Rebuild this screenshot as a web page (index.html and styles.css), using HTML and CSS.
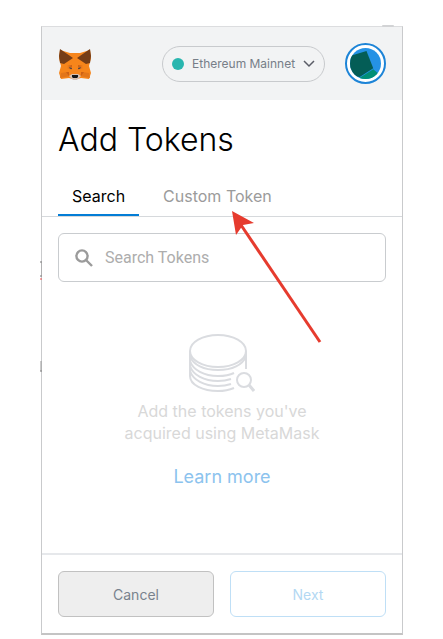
FILE: index.html
```html
<!DOCTYPE html>
<html lang="en">
<head>
  <meta charset="UTF-8">
  <title>Add Tokens</title>
  <meta name="viewport" content="width=device-width, initial-scale=1.0">
  <link rel="stylesheet" href="styles.css">
</head>
<body>
  <main class="popup">
    <header class="top-bar">
      <svg class="fox" viewBox="0 0 34 32" aria-label="MetaMask" role="img">
        <path fill="#f6851b" d="M2 2l10 3h10l10-3 1 8-2 8 2 7-2 6-8-1-4 1h-4l-4-1-8 1-2-6 2-7-2-8z"/>
        <path fill="#763d16" d="M2 1l13 9-9 6-4-1-1-7zM32 1L19 10l9 6 4-1 1-7z"/>
        <path fill="#e2761b" d="M3 25l7-1 2 4-10 2zM31 25l-7-1-2 4 10 2z"/>
        <path fill="#e4751f" d="M14 17l-5 3 5 2zM20 17l5 3-5 2z"/>
        <path fill="#cd6116" d="M9 18l5-1v2zM25 18l-5-1v2zM8 24h3v4zM26 24h-3v4z"/>
        <path fill="#5b4a3f" d="M11 19l3 1v1h-2zM23 19l-3 1v1h2z"/>
        <path fill="#d7c1b3" d="M11 28l3-2h6l3 2-4 4h-4z"/>
        <path fill="#161616" d="M14 27h6v2l-1 1h-4l-1-1z"/>
      </svg>
      <label class="network">
        <span class="network-dot"></span>
        <select class="network-select" aria-label="Network">
          <option>Ethereum Mainnet</option>
        </select>
        <svg class="chevron" viewBox="0 0 12 8"><path d="M1 1l5 5 5-5"/></svg>
      </label>
      <button class="account" type="button" aria-label="My account">
        <svg viewBox="0 0 32 32">
          <clipPath id="round"><circle cx="16" cy="16" r="16"/></clipPath>
          <g clip-path="url(#round)">
            <path fill="#2592e5" d="M0 0h32v32H0z"/>
            <path fill="#018e76" d="M8 32l16-10 6 5-4 8H10z"/>
            <path fill="#045d56" d="M-2 9l19-6 7 18-14 9-12-2z"/>
          </g>
        </svg>
      </button>
    </header>

    <h1>Add Tokens</h1>

    <nav class="tabs">
      <button class="tab active" type="button">Search</button>
      <button class="tab" type="button">Custom Token</button>
    </nav>

    <section class="content">
      <label class="search">
        <svg class="search-icon" viewBox="0 0 18 18"><circle cx="7" cy="7" r="5.6"/><path d="M11 11l6 6"/></svg>
        <input class="search-input" type="text" placeholder="Search Tokens" aria-label="Search Tokens">
      </label>

      <div class="empty">
        <svg class="coins" viewBox="0 0 66 58">
          <ellipse cx="29" cy="17" rx="28" ry="16"/>
          <path d="M1 17v25c0 9 13 15 28 15q9 0 16-3"/>
          <path d="M57 17v18"/>
          <path d="M1 22c3 9 14 14 28 14s25-5 28-14"/>
          <path d="M1 27c3 9 14 15 28 15 7 0 12-1 16-3"/>
          <path d="M1 32c3 9 14 15 28 15 5 0 10-1 13-2"/>
          <path d="M1 37c3 9 14 15 28 15 5 0 10-1 13-2"/>
          <circle cx="55" cy="46" r="7"/>
          <path class="handle" d="M60 51l5 6"/>
        </svg>
        <p>Add the tokens you've<br>acquired using MetaMask</p>
        <a class="learn-more" href="#">Learn more</a>
      </div>
    </section>

    <footer class="actions">
      <button class="btn cancel" type="button">Cancel</button>
      <button class="btn next" type="button" disabled>Next</button>
    </footer>

    <!-- arrow pointing at the Custom Token tab -->
    <svg class="arrow" viewBox="0 0 90 134">
      <path class="arrow-line" d="M9 14l79 117"/>
      <path class="arrow-head" d="M0 0l22 12-11 2-7 10z"/>
    </svg>

    <!-- bits of the page behind the popup -->
    <svg class="behind" viewBox="0 0 2 112">
      <path stroke="#777" d="M0 1h2M0 15h2M0 110h2"/>
      <path stroke="#999" d="M2 1v14M1 100v10"/>
      <path stroke="#f05050" d="M0 18h2"/>
    </svg>
    <span class="behind-top"></span>
  </main>
</body>
</html>
```

FILE: styles.css
```css
* {
  box-sizing: border-box;
}

body {
  margin: 0;
  padding: 26px 40px 4px 41px;
  background: #fff;
  font-family: Inter, "Liberation Sans", sans-serif;
}

button, select, input {
  font-family: inherit;
}

.popup {
  position: relative;
  border: 1px solid #c9cacc;
  border-top-color: #dcdddf;
  border-bottom: 2px solid #c4c4c4;
  background: #fff;
}

.top-bar {
  display: flex;
  align-items: center;
  height: 73px;
  padding: 0 16px;
  background: #f2f3f4;
}

.fox {
  width: 34px;
  height: 32px;
}

.network {
  display: flex;
  align-items: center;
  width: 163px;
  height: 36px;
  margin-left: auto;
  padding: 0 9px;
  border: 1px solid #c8cacd;
  border-radius: 18px;
}

.network-dot {
  flex: none;
  width: 12px;
  height: 12px;
  margin-right: 8px;
  border-radius: 50%;
  background: #29b6af;
}

.network-select {
  flex: 1;
  min-width: 0;
  padding: 0;
  border: 0;
  background: none;
  appearance: none;
  color: #777e88;
  font-size: 12px;
}

.chevron {
  flex: none;
  width: 12px;
  height: 8px;
  fill: none;
  stroke: #5b5d67;
  stroke-width: 1.5;
}

.account {
  width: 41px;
  height: 41px;
  margin-left: 20px;
  padding: 3px;
  border: 2px solid #1d84d7;
  border-radius: 50%;
  background: #fff;
}

.account svg {
  display: block;
  width: 31px;
  height: 31px;
}

h1 {
  margin: 0;
  padding: 17px 16px 0;
  color: #000;
  font-size: 32px;
  font-weight: 300;
  line-height: 46px;
}

.tabs {
  display: flex;
  gap: 10px;
  padding: 12px 16px 0;
  border-bottom: 1px solid #d6d9dc;
}

.tab {
  height: 41px;
  padding: 2px 14px 0;
  border: 0;
  border-bottom: 2px solid transparent;
  background: none;
  color: #9b9b9b;
  font-size: 16px;
}

.active {
  border-bottom-color: #037dd6;
  color: #000;
}

.content {
  padding: 16px 16px 0;
}

.search {
  display: flex;
  align-items: center;
  height: 49px;
  padding: 0 16px;
  border: 1px solid #c9cccf;
  border-radius: 6px;
}

.search-icon {
  flex: none;
  width: 18px;
  height: 18px;
  margin-right: 12px;
  fill: none;
  stroke: #9b9b9b;
  stroke-width: 2.4;
}

.search-input {
  flex: 1;
  min-width: 0;
  padding: 0;
  border: 0;
  outline: 0;
  background: none;
  font-family: Roboto, sans-serif;
  font-size: 16px;
}

.search-input::placeholder {
  color: #adadad;
}

.empty {
  display: flex;
  flex-direction: column;
  align-items: center;
  padding: 52px 0 63px;
}

.coins {
  width: 66px;
  height: 58px;
  fill: none;
  stroke: #dadce0;
  stroke-width: 2;
}

.handle {
  stroke-width: 3;
}

.empty p {
  margin: 8px 0 0;
  color: #d8d8d8;
  font-size: 16px;
  line-height: 22px;
  text-align: center;
}

.learn-more {
  margin-top: 20px;
  color: #8cc3ee;
  font-size: 18px;
  line-height: 26px;
  text-decoration: none;
}

.actions {
  display: flex;
  gap: 16px;
  padding: 16px;
  border-top: 2px solid #e6e8eb;
}

.btn {
  flex: 1;
  height: 46px;
  border: 1px solid #c1c1c1;
  border-radius: 6px;
  background: #fff;
  font-size: 14px;
}

.cancel {
  background: #eee;
  color: #78828d;
}

.next {
  border-color: #bfdff6;
  color: #b3d8f3;
}

.arrow {
  position: absolute;
  top: 184px;
  left: 190px;
  width: 90px;
  height: 134px;
  pointer-events: none;
}

.arrow-line {
  fill: none;
  stroke: #e63b2e;
  stroke-width: 3;
}

.arrow-head {
  fill: #e63b2e;
}

.behind {
  position: absolute;
  top: 234px;
  left: -2px;
  width: 2px;
  height: 112px;
  fill: none;
}

.behind-top {
  position: absolute;
  top: -2px;
  right: 8px;
  width: 12px;
  height: 2px;
  border-radius: 2px;
  background: #d2d3d5;
}
```
